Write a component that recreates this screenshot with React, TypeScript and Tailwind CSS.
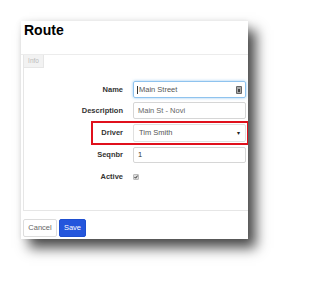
import React from 'react';

const Row: React.FC<{ label: string; className?: string; children: React.ReactNode }> = ({ label, className = '', children }) => (
  <div className={`flex items-center ${className}`}>
    <div className="w-[99px] text-right text-[7.5px] font-bold text-[#333]">{label}</div>
    <div className="ml-[10px] w-[113px]">{children}</div>
  </div>
);

export default function App() {
  return (
    <div className="w-[293px] h-[282px] bg-white overflow-hidden pt-[21px] pl-[21px] font-['Liberation_Sans',Arial,sans-serif]">
      <div className="relative w-[227px] h-[218px] bg-white shadow-[8px_9px_12px_rgba(0,0,0,0.7),0_0_6px_rgba(0,0,0,0.08)] overflow-hidden">
        {/* header */}
        <div className="h-[34px] border-b border-[#ececec] pl-[3px] pt-[1px]">
          <h1 className="text-[14px] leading-[16px] font-bold text-black">Route</h1>
        </div>

        {/* tab pane */}
        <div className="ml-[2px] w-[240px] h-[156px] border border-[#e6e6e6] border-t-0">
          <div className="w-[20px] h-[13px] bg-[#f2f2f2] border-r border-b border-[#e6e6e6] flex items-center justify-center">
            <span className="text-[6.5px] text-[#bbb]">Info</span>
          </div>

          <div className="flex flex-col">
            <Row label="Name" className="mt-[13px]">
              <div className="h-[17px] rounded-[2px] border border-[#8fc3ee] shadow-[0_0_3px_rgba(102,175,233,0.7)] flex items-center pl-[3px] pr-[3px]">
                <span className="w-px h-[8px] bg-[#333] mr-[1px]" />
                <span className="text-[7.5px] text-[#555] flex-1">Main Street</span>
                <svg width="6" height="8" viewBox="0 0 6 8">
                  <rect x="0" y="0" width="6" height="8" rx="1" fill="#666" />
                  <rect x="1" y="1" width="4" height="6" fill="#aaa" />
                  <rect x="2" y="3" width="2" height="3" fill="#444" />
                </svg>
              </div>
            </Row>
            <Row label="Description" className="mt-[4px]">
              <div className="h-[17px] rounded-[2px] border border-[#d6d6d6] flex items-center pl-[4px]">
                <span className="text-[7.5px] text-[#666]">Main St - Novi</span>
              </div>
            </Row>
            <Row label="Driver" className="mt-[5px]">
              <div className="h-[18px] rounded-[2px] border border-[#e0e0e0] flex items-center pl-[5px] pr-[5px]">
                <span className="text-[7.5px] text-[#555] flex-1">Tim Smith</span>
                <span className="text-[6px] text-[#222]">▾</span>
              </div>
            </Row>
            <Row label="Seqnbr" className="mt-[5px]">
              <div className="h-[16px] rounded-[2px] border border-[#d6d6d6] flex items-center pl-[4px]">
                <span className="text-[7.5px] text-[#333]">1</span>
              </div>
            </Row>
            <Row label="Active" className="mt-[8px]">
              <div className="h-[10px] flex items-center">
                <div className="w-[6px] h-[6px] rounded-[1px] bg-[#ddd] border border-[#bbb] flex items-center justify-center">
                  <svg width="4" height="4" viewBox="0 0 4 4">
                    <path d="M0.5 2 L1.6 3.2 L3.6 0.6" stroke="#222" strokeWidth="0.9" fill="none" />
                  </svg>
                </div>
              </div>
            </Row>
          </div>
        </div>

        {/* buttons */}
        <div className="flex gap-[2px] ml-[2px] mt-[8px]">
          <button className="w-[34px] h-[18px] rounded-[2px] border border-[#ddd] bg-white text-[7.5px] text-[#666]">Cancel</button>
          <button className="w-[27px] h-[18px] rounded-[2px] border border-[#1f4fd0] bg-[#2456dc] text-[7.5px] text-white">Save</button>
        </div>

        {/* annotation highlight */}
        <div className="absolute left-[70px] top-[100px] w-[158px] h-[24px] border-2 border-[#e0101c] pointer-events-none" />
      </div>
    </div>
  );
}
